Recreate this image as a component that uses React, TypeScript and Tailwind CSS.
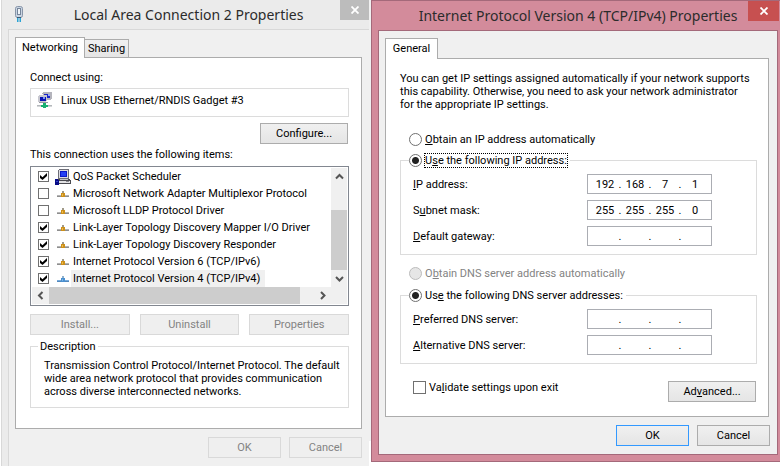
import clsx from 'clsx';
import React, { ReactNode, useState } from 'react';

interface NetworkItem {
    name: string;
    checked: boolean;
    icon: 'computer' | 'protocol' | 'protocol-active';
}

const networkItems: NetworkItem[] = [
    { name: 'QoS Packet Scheduler', checked: true, icon: 'computer' },
    {
        name: 'Microsoft Network Adapter Multiplexor Protocol',
        checked: false,
        icon: 'protocol',
    },
    {
        name: 'Microsoft LLDP Protocol Driver',
        checked: false,
        icon: 'protocol',
    },
    {
        name: 'Link-Layer Topology Discovery Mapper I/O Driver',
        checked: true,
        icon: 'protocol',
    },
    {
        name: 'Link-Layer Topology Discovery Responder',
        checked: true,
        icon: 'protocol',
    },
    {
        name: 'Internet Protocol Version 6 (TCP/IPv6)',
        checked: true,
        icon: 'protocol',
    },
    {
        name: 'Internet Protocol Version 4 (TCP/IPv4)',
        checked: true,
        icon: 'protocol-active',
    },
];

const AdapterIcon = () => (
    <svg width="8" height="16" viewBox="0 0 8 16" aria-hidden="true">
        <rect x="0.5" y="0.5" width="7" height="11" rx="2" fill="#c9d4e2" stroke="#8795a8" />
        <rect x="2.5" y="2.5" width="3" height="6" fill="#f0f4f8" stroke="#76859a" />
        <path d="M2 11h4v1H2z" fill="#3d5873" />
        <path d="M2 12h1.500v4H2zM4.500 12H6v4H4.500z" fill="#2ba3d4" />
    </svg>
);

const NetworkIcon = () => (
    <svg width="16" height="16" viewBox="0 0 16 16" shapeRendering="crispEdges" aria-hidden="true">
        <path d="M6 0h9v1H6zM5 1h10v6h-1v1H9z" fill="#b4b4bc" />
        <path d="M7 2h6v4H7z" fill="#1a24c8" />
        <path d="M11 2h2v2h-2z" fill="#9aaef2" />
        <path d="M2 3h8v1H2zM1 4h9v5H9v1H1z" fill="#c8c8d0" />
        <path d="M3 5h6v4H3z" fill="#0a12b4" />
        <path d="M6 5h2v2H6z" fill="#7c96f0" />
        <path d="M2 10h9v1H2z" fill="#9a9aa2" />
        <path d="M0 13h15v1H0z" fill="#b4b8bc" />
        <path d="M0 14h15v1H0z" fill="#d4d6d8" />
        <path d="M6 11h3v2h2v2H9v1H6v-1H4v-2h2z" fill="#18b070" />
    </svg>
);

const ComputerIcon = () => (
    <svg width="16" height="16" viewBox="0 0 16 16" shapeRendering="crispEdges" aria-hidden="true">
        <path d="M4 0h9l1 1v9H3V1z" fill="#6e6e78" />
        <path d="M4 1h9v8H4z" fill="#dcdce2" />
        <path d="M5 2h7v6H5z" fill="#0a18c8" />
        <path d="M6 3h5v4H6z" fill="#2440f4" />
        <path d="M3 10h11l2 2v3H2v-3z" fill="#4a4a50" />
        <path d="M5 10h8v1H5z" fill="#c4c4c8" />
        <path d="M4 12h11v2H4z" fill="#e2e2e4" />
        <path d="M11 12h3v1h-3z" fill="#8a8a90" />
        <path d="M0 10h2l2 1v5H0z" fill="#080c86" />
        <path d="M1 12h2v1H1z" fill="#3040c8" />
    </svg>
);

const ProtocolIcon = ({ active }: { active: boolean }) => (
    <svg
        width="12"
        height="6"
        viewBox="0 0 12 6"
        shapeRendering="crispEdges"
        aria-hidden="true"
    >
        <path d="M0 4h12v1H0z" fill={active ? '#76aadc' : '#b4b4b4'} />
        <path d="M0 5h12v1H0z" fill={active ? '#5288bc' : '#8e8e8e'} />
        <path d="M5 0h2v2H5z" fill={active ? '#8fb0cc' : '#a09a88'} />
        <path d="M4 2h4v4H4z" fill={active ? '#4a90d0' : '#cc901c'} />
        <path d="M5 3h1v2H5z" fill={active ? '#7db4e2' : '#f0bc48'} />
    </svg>
);

const Chevron = ({ d }: { d: string }) => (
    <svg width="9" height="9" viewBox="0 0 9 9" aria-hidden="true">
        <path d={d} fill="none" stroke="#555" strokeWidth="2" />
    </svg>
);

interface TitleBarProps {
    title: string;
    icon?: ReactNode;
    active?: boolean;
}

const TitleBar = ({ title, icon, active = false }: TitleBarProps) => (
    <header className="flex h-[29px] items-start">
        {icon && <span className="w-0 pt-[6px] pl-[13px]">{icon}</span>}
        <h1
            className={clsx(
                'flex-1 truncate text-center font-["Noto_Sans",sans-serif] text-[14px] leading-[30px] text-[#2b2b2b]',
                icon ? 'pl-[22px]' : 'pl-[36px]',
            )}
        >
            {title}
        </h1>
        <button
            type="button"
            aria-label="Close"
            className={clsx(
                'flex h-[20px] shrink-0 items-center justify-center',
                active ? 'w-[31px] bg-[#c75050]' : 'w-[29px] bg-[#bcbcbc]',
            )}
        >
            <svg width="8" height="8" viewBox="0 0 8 8" aria-hidden="true">
                <path d="M0.5 0.5l7 7M7.5 0.5l-7 7" stroke="#fff" strokeWidth="1.8" />
            </svg>
        </button>
    </header>
);

interface ButtonProps {
    children: ReactNode;
    className?: string;
    disabled?: boolean;
    primary?: boolean;
}

const Button = ({ children, className, disabled, primary }: ButtonProps) => (
    <button
        type="button"
        disabled={disabled}
        className={clsx(
            'h-[21px] border leading-[13px]',
            disabled
                ? 'border-[#d9d9d9] bg-[#efefef] text-[#838383]'
                : 'bg-linear-to-b from-[#f0f0f0] to-[#e5e5e5]',
            !disabled && (primary ? 'border-[#3399ff]' : 'border-[#acacac]'),
            className,
        )}
    >
        {children}
    </button>
);

interface CheckboxProps {
    id: string;
    defaultChecked?: boolean;
    className: string;
}

const Checkbox = ({ id, defaultChecked, className }: CheckboxProps) => (
    <span className="grid shrink-0 place-items-center">
        <input
            id={id}
            type="checkbox"
            defaultChecked={defaultChecked}
            className={clsx(
                'peer col-start-1 row-start-1 appearance-none border border-[#707070] bg-white',
                className,
            )}
        />
        <svg
            width="7"
            height="7"
            viewBox="0 0 7 7"
            aria-hidden="true"
            className="pointer-events-none invisible col-start-1 row-start-1 peer-checked:visible"
        >
            <path d="M0 2v3l2.500 2L7 3V0L2.500 4.200z" fill="#000" />
        </svg>
    </span>
);

interface RadioProps {
    name: string;
    label: ReactNode;
    defaultChecked?: boolean;
    disabled?: boolean;
    focused?: boolean;
}

const Radio = ({ name, label, defaultChecked, disabled, focused }: RadioProps) => (
    <label className={clsx('flex items-center', disabled && 'text-[#838383]')}>
        <input
            type="radio"
            name={name}
            defaultChecked={defaultChecked}
            disabled={disabled}
            className="size-[13px] appearance-none rounded-full border border-[#707070] bg-white checked:bg-[radial-gradient(circle,#222_3px,#fff_4px)] disabled:border-[#bcbcbc] disabled:bg-[#e6e6e6]"
        />
        <span
            className={clsx(
                'ml-[2px] border border-dotted leading-[13px]',
                focused ? 'border-black' : 'border-transparent',
            )}
        >
            {label}
        </span>
    </label>
);

interface AddressFieldProps {
    id: string;
    label: ReactNode;
    octets?: string[];
}

const AddressField = ({ id, label, octets = ['', '', '', ''] }: AddressFieldProps) => {
    const [values, setValues] = useState(octets);

    function handleChange(index: number, value: string) {
        setValues(values.map((v, i) => (i === index ? value : v)));
    }

    return (
        <div className="flex items-center justify-between">
            <label htmlFor={`${id}-0`}>{label}</label>
            <div className="flex h-[20px] w-[125px] items-center border border-[#abadb3] bg-white pl-[5px]">
                {values.map((value, index) => (
                    <React.Fragment key={index}>
                        {index > 0 && <span className="w-[6px] text-center">.</span>}
                        <input
                            id={`${id}-${index}`}
                            aria-label={`${id} ${index + 1}`}
                            value={value}
                            maxLength={3}
                            onChange={(e) => handleChange(index, e.target.value)}
                            className="w-[24px] text-center outline-none"
                        />
                    </React.Fragment>
                ))}
            </div>
        </div>
    );
};

const ItemIcon = ({ icon }: { icon: NetworkItem['icon'] }) =>
    icon === 'computer' ? (
        <ComputerIcon />
    ) : (
        <ProtocolIcon active={icon === 'protocol-active'} />
    );

const ItemList = () => (
    <div className="grid grid-cols-[1fr_16px] border border-[#828790] bg-white p-px">
        <ul>
            {networkItems.map((item, index) => (
                <li key={item.name} className="flex h-[17px] items-center pl-[6px]">
                    <Checkbox
                        id={`item-${index}`}
                        defaultChecked={item.checked}
                        className="size-[11px]"
                    />
                    <span className="ml-[6px] flex w-[16px] justify-center">
                        <ItemIcon icon={item.icon} />
                    </span>
                    <label
                        htmlFor={`item-${index}`}
                        className={clsx(
                            'flex h-full items-center pr-[5px] pl-[2px] whitespace-nowrap',
                            item.icon === 'protocol-active' && 'bg-[#f0f0f0]',
                        )}
                    >
                        {item.name}
                    </label>
                </li>
            ))}
        </ul>
        <div className="flex flex-col items-center bg-[#f0f0f0]">
            <button type="button" aria-label="Scroll up" className="flex h-[42px] pt-[4px]">
                <Chevron d="M1 6.500l3.500-3.500l3.500 3.500" />
            </button>
            <div className="w-full flex-1 bg-[#cdcdcd]" />
            <button type="button" aria-label="Scroll down" className="flex h-[17px] items-center">
                <Chevron d="M1 3l3.500 3.500l3.500-3.500" />
            </button>
        </div>
        <div className="col-span-2 flex h-[17px] bg-[#f0f0f0]">
            <button
                type="button"
                aria-label="Scroll left"
                className="flex w-[17px] items-center justify-center"
            >
                <Chevron d="M6.500 1l-3.500 3.500l3.500 3.500" />
            </button>
            <div className="flex-1 bg-[#cdcdcd]" />
            <button
                type="button"
                aria-label="Scroll right"
                className="mr-[15px] flex w-[32px] items-center justify-end pr-[5px]"
            >
                <Chevron d="M3 1l3.500 3.500l-3.500 3.500" />
            </button>
        </div>
    </div>
);

const ConnectionWindow = () => (
    <section className="flex flex-[368] flex-col border-l border-[#d8d8d8] bg-[#ebebeb]">
        <TitleBar title="Local Area Connection 2 Properties" icon={<AdapterIcon />} />
        <div className="ml-[6px] flex-1 border-t border-l border-[#d8d8d8] bg-[#f0f0f0] pt-[7px] pr-[7px] pl-[6px]">
            <div role="tablist" className="flex h-[20px] items-end">
                <button
                    type="button"
                    role="tab"
                    aria-selected="true"
                    className="z-10 -mb-px h-[21px] w-[70px] border border-b-0 border-[#acacac] bg-white pb-[2px]"
                >
                    Networking
                </button>
                <button
                    type="button"
                    role="tab"
                    aria-selected="false"
                    className="h-[18px] w-[44px] border border-b-0 border-l-0 border-[#acacac] bg-linear-to-b from-[#f0f0f0] to-[#e5e5e5]"
                >
                    Sharing
                </button>
            </div>
            <div className="border border-[#acacac] bg-white px-[12px] pt-[13px] pb-[20px] pl-[14px]">
                <p>Connect using:</p>
                <div className="mt-[4px] flex h-[29px] border border-[#dcdcdc] pt-[3px] pl-[6px]">
                    <NetworkIcon />
                    <span className="ml-[8px] pt-[2px]">Linux USB Ethernet/RNDIS Gadget #3</span>
                </div>
                <div className="mt-[6px] flex justify-end pr-px">
                    <Button className="w-[88px]">Configure...</Button>
                </div>
                <p className="mt-[4px] mb-[5px]">This connection uses the following items:</p>
                <ItemList />
                <div className="mt-[8px] grid grid-cols-3 gap-[10px]">
                    <Button disabled>Install...</Button>
                    <Button disabled>Uninstall</Button>
                    <Button disabled>Properties</Button>
                </div>
                <fieldset className="mt-[5px] border border-[#dcdcdc] pt-[6px] pr-[6px] pb-[9px] pl-[13px]">
                    <legend className="-ml-[6px] px-[2px]">Description</legend>
                    <p>
                        Transmission Control Protocol/Internet Protocol. The default wide area
                        network protocol that provides communication across diverse interconnected
                        networks.
                    </p>
                </fieldset>
            </div>
            <div className="mt-[8px] flex justify-end gap-[8px] pb-[9px]">
                <Button disabled className="w-[73px]">
                    OK
                </Button>
                <Button disabled className="w-[73px]">
                    Cancel
                </Button>
            </div>
        </div>
    </section>
);

const ProtocolWindow = () => (
    <section className="flex-[409] self-start border border-r-0 border-[#a4697a] bg-[#d38b9b] pb-[6px]">
        <div className="pr-px">
            <TitleBar title="Internet Protocol Version 4 (TCP/IPv4) Properties" active />
        </div>
        <div className="mr-[2px] ml-[6px] border border-[#a4697a] bg-[#f0f0f0] pt-[7px] pr-[7px] pb-[8px] pl-[6px]">
            <div role="tablist" className="flex h-[20px]">
                <button
                    type="button"
                    role="tab"
                    aria-selected="true"
                    className="z-10 h-[21px] w-[53px] border border-b-0 border-[#acacac] bg-white pb-[2px]"
                >
                    General
                </button>
            </div>
            <div className="mr-px border border-[#acacac] bg-white pt-[13px] pr-[11px] pb-[14px] pl-[14px]">
                <p className="pr-[4px]">
                    You can get IP settings assigned automatically if your network supports this
                    capability. Otherwise, you need to ask your network administrator for the
                    appropriate IP settings.
                </p>
                <div className="mt-[21px] pl-[9px]">
                    <Radio name="ip" label={<><u>O</u>btain an IP address automatically</>} />
                </div>
                <fieldset className="mt-[6px] border border-[#dcdcdc] pr-[44px] pb-[8px] pl-[12px]">
                    <legend className="-ml-[4px] pr-[2px]">
                        <Radio
                            name="ip"
                            label={<>U<u>s</u>e the following IP address:</>}
                            defaultChecked
                            focused
                        />
                    </legend>
                    <div className="flex flex-col gap-[6px] pt-[6px]">
                        <AddressField
                            id="ip-address"
                            label={<><u>I</u>P address:</>}
                            octets={['192', '168', '7', '1']}
                        />
                        <AddressField
                            id="subnet-mask"
                            label={<>S<u>u</u>bnet mask:</>}
                            octets={['255', '255', '255', '0']}
                        />
                        <AddressField id="gateway" label={<><u>D</u>efault gateway:</>} />
                    </div>
                </fieldset>
                <div className="mt-[11px] pl-[9px]">
                    <Radio
                        name="dns"
                        label={<>O<u>b</u>tain DNS server address automatically</>}
                        disabled
                    />
                </div>
                <fieldset className="mt-[7px] border border-[#dcdcdc] pr-[44px] pb-[8px] pl-[12px]">
                    <legend className="-ml-[4px] pr-[2px]">
                        <Radio
                            name="dns"
                            label={<>Us<u>e</u> the following DNS server addresses:</>}
                            defaultChecked
                        />
                    </legend>
                    <div className="flex flex-col gap-[6px] pt-[6px]">
                        <AddressField id="preferred-dns" label={<><u>P</u>referred DNS server:</>} />
                        <AddressField id="alternative-dns" label={<><u>A</u>lternative DNS server:</>} />
                    </div>
                </fieldset>
                <div className="mt-[17px] flex items-start justify-between pr-px pl-[13px]">
                    <div className="flex items-center">
                        <Checkbox id="validate" className="size-[13px]" />
                        <label htmlFor="validate" className="pl-[3px]">
                            Va<u>l</u>idate settings upon exit
                        </label>
                    </div>
                    <Button className="w-[88px]">
                        Ad<u>v</u>anced...
                    </Button>
                </div>
            </div>
            <div className="mt-[8px] flex justify-end gap-[8px]">
                <Button primary className="w-[73px]">
                    OK
                </Button>
                <Button className="w-[73px]">Cancel</Button>
            </div>
        </div>
    </section>
);

const App = () => (
    <main className='flex min-h-screen bg-white pl-px font-["Roboto",sans-serif] text-[11px] leading-[13px] text-black'>
        <ConnectionWindow />
        <div className="h-[441px] w-[2px] bg-[#f0f0f0]" />
        <ProtocolWindow />
    </main>
);

export default App;
